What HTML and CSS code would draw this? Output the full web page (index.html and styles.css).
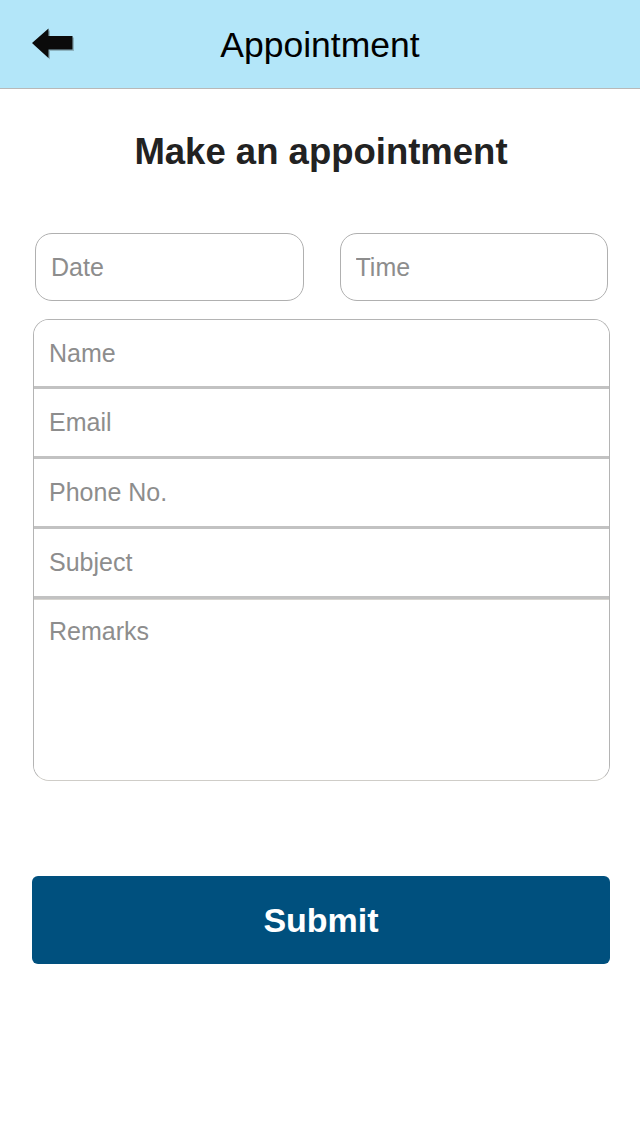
FILE: index.html
```html
<!DOCTYPE html>
<html lang="en">
<head>
<meta charset="utf-8">
<title>Appointment</title>
<link rel="stylesheet" href="styles.css">
</head>
<body>
<header class="topbar">
  <div class="topbar-left">
    <svg class="back" width="46" height="34" viewBox="0 0 46 34" aria-label="Back">
      <path d="M1 16 L17.5 1.5 L17.5 9 L41.5 9 L41.5 22.5 L17.5 22.5 L17.5 31 Z" fill="#56666c" opacity="0.4" transform="translate(1.5,1.5)"/>
      <path d="M1 16 L17.5 1.5 L17.5 9 L41.5 9 L41.5 22.5 L17.5 22.5 L17.5 31 Z" fill="#0b0b0b"/>
    </svg>
  </div>
  <h1 class="topbar-title">Appointment</h1>
  <div class="topbar-right"></div>
</header>
<main class="content">
  <h2 class="heading">Make an appointment</h2>
  <div class="pair">
    <input class="pill" type="text" placeholder="Date">
    <input class="pill" type="text" placeholder="Time">
  </div>
  <div class="group">
    <input class="row" type="text" placeholder="Name">
    <input class="row" type="text" placeholder="Email">
    <input class="row" type="text" placeholder="Phone No.">
    <input class="row" type="text" placeholder="Subject">
    <textarea class="remarks" placeholder="Remarks"></textarea>
  </div>
  <button class="submit" type="button">Submit</button>
</main>
</body>
</html>
```
FILE: styles.css
```css
* { box-sizing: border-box; }
html, body { margin: 0; padding: 0; background: #ffffff; }
body {
  width: 640px;
  min-height: 1136px;
  font-family: "Liberation Sans", Arial, Helvetica, sans-serif;
  color: #000;
}
.topbar {
  height: 89px;
  background: #b3e6f9;
  border-bottom: 1px solid #b8b8b8;
  display: grid;
  grid-template-columns: 1fr auto 1fr;
  align-items: center;
}
.topbar-left {
  padding-left: 31px;
  display: flex;
  align-items: center;
}
.back { display: block; }
.topbar-title {
  margin: 0;
  font-size: 35.5px;
  font-weight: normal;
  color: #000;
  line-height: 40px;
  padding-top: 2px;
}
.content {
  padding: 0 30px 0 32px;
  display: flex;
  flex-direction: column;
}
.heading {
  margin: 42px 0 0;
  text-align: center;
  font-size: 36.5px;
  line-height: 42px;
  font-weight: bold;
  color: #222;
}
.pair {
  margin-top: 60px;
  padding: 0 2px 0 3px;
  display: flex;
  gap: 36px;
}
.pill {
  flex: 1 1 0;
  width: 0;
  min-width: 0;
  height: 68px;
  border: 1.5px solid #b0b0b0;
  border-radius: 17px;
  padding: 0 15px;
  font-family: inherit;
  font-size: 25px;
  color: #333;
  background: #fff;
  outline: none;
}
.pill::placeholder, .row::placeholder, .remarks::placeholder { color: #8d8d8d; opacity: 1; }
.group {
  margin-top: 18px;
  margin-left: 1px;
  border: 1.5px solid #b4b4b4;
  border-bottom-color: #cfcdc8;
  border-radius: 16px;
  overflow: hidden;
  display: flex;
  flex-direction: column;
}
.row {
  width: 100%;
  height: 70px;
  border: none;
  border-bottom: 3px solid #c2c2c2;
  padding: 0 15px;
  font-family: inherit;
  font-size: 25px;
  color: #333;
  background: #fff;
  outline: none;
}
.row:first-child { height: 69px; }
.remarks {
  width: 100%;
  height: 181px;
  border: none;
  border-top: 1px solid #d6d4cf;
  resize: none;
  padding: 15px;
  font-family: inherit;
  font-size: 25px;
  line-height: 32px;
  color: #333;
  background: #fff;
  outline: none;
}
.submit {
  margin-top: 95px;
  height: 88px;
  border: none;
  border-radius: 6px;
  background: #00507e;
  color: #fff;
  font-family: inherit;
  font-weight: bold;
  font-size: 34px;
  cursor: pointer;
}
```
